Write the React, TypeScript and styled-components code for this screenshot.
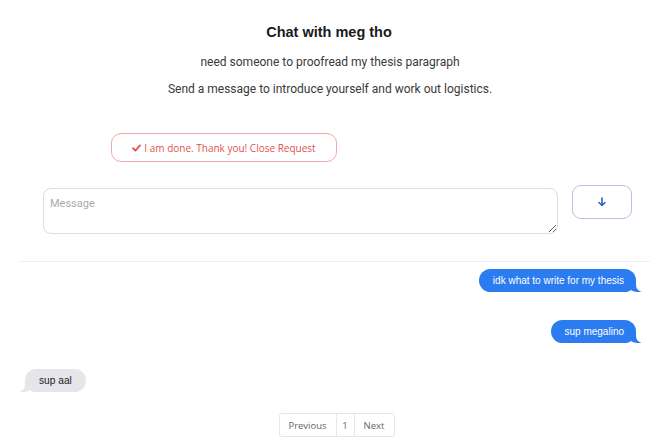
import React from "react";
import styled, { createGlobalStyle } from "styled-components";

const Global = createGlobalStyle`
  html, body { margin: 0; padding: 0; background: #fff; }
  body { font-family: "Liberation Sans", Arial, sans-serif; overflow: hidden; }
`;

const Page = styled.div`
  width: 650px;
  height: 448px;
  display: flex;
  flex-direction: column;
`;

const Header = styled.header`
  display: flex;
  flex-direction: column;
  align-items: center;
  padding-top: 22px;
  padding-left: 10px;
`;

const Title = styled.h1`
  margin: 0 0 0 -2px;
  font-family: "Liberation Sans", Arial, sans-serif;
  font-size: 14.5px;
  font-weight: 700;
  line-height: 20px;
  color: #1a1a1a;
`;

const Sub = styled.p<{ $top: number }>`
  margin: ${(p) => p.$top}px 0 0;
  font-family: Roboto, "Noto Sans", sans-serif;
  font-size: 12px;
  line-height: 16px;
  color: #3a3a3a;
`;

const CloseRow = styled.div`
  display: flex;
  padding-left: 111px;
  margin-top: 36px;
`;

const CloseButton = styled.button`
  width: 226px;
  height: 29px;
  border: 1px solid #f2a9a9;
  border-radius: 10px;
  background: #fff;
  color: #e0524f;
  font-family: "Open Sans", Lato, sans-serif;
  font-size: 10px;
  display: flex;
  align-items: center;
  justify-content: center;
  gap: 3px;
  padding: 0;
  cursor: pointer;
`;

const FormRow = styled.div`
  display: flex;
  align-items: flex-start;
  padding-left: 43px;
  margin-top: 23px;
  gap: 14px;
`;

const MessageBox = styled.textarea`
  box-sizing: border-box;
  width: 515px;
  height: 46px;
  margin-top: 3px;
  border: 1px solid #ddd;
  border-radius: 8px;
  padding: 8px 6px;
  font-family: Roboto, "Noto Sans", sans-serif;
  font-size: 11px;
  color: #333;
  outline: none;
  &::placeholder { color: #aaa; }
`;

const SendButton = styled.button`
  box-sizing: border-box;
  width: 60px;
  height: 34px;
  border: 1px solid #b5c3e3;
  border-radius: 9px;
  background: #fff;
  display: flex;
  align-items: center;
  justify-content: center;
  padding: 0;
  cursor: pointer;
`;

const Messages = styled.section`
  margin-top: 27px;
  margin-left: 18px;
  border-top: 1px solid #f0f0f0;
  display: flex;
  flex-direction: column;
  padding-top: 7px;
  padding-right: 14px;
`;

const Bubble = styled.div<{ $me?: boolean; $top: number }>`
  position: relative;
  align-self: ${(p) => (p.$me ? "flex-end" : "flex-start")};
  margin-top: ${(p) => p.$top}px;
  margin-left: ${(p) => (p.$me ? 0 : 7)}px;
  background: ${(p) => (p.$me ? "#2b7cf0" : "#e5e5ea")};
  color: ${(p) => (p.$me ? "#fff" : "#222")};
  font-family: "Liberation Sans", Arial, sans-serif;
  font-size: 10px;
  line-height: 13px;
  padding: 5px 12px 5px 14px;
  border-radius: 12px;
  z-index: 0;

  &::before {
    content: "";
    position: absolute;
    bottom: 0;
    ${(p) => (p.$me ? "right: -5px;" : "left: -5px;")}
    width: 14px;
    height: 12px;
    background: ${(p) => (p.$me ? "#2b7cf0" : "#e5e5ea")};
    ${(p) =>
      p.$me
        ? "border-bottom-left-radius: 10px 9px;"
        : "border-bottom-right-radius: 10px 9px;"}
    z-index: -1;
  }
  &::after {
    content: "";
    position: absolute;
    bottom: 0;
    ${(p) => (p.$me ? "right: -16px;" : "left: -16px;")}
    width: 16px;
    height: 12px;
    background: #fff;
    ${(p) =>
      p.$me
        ? "border-bottom-left-radius: 7px;"
        : "border-bottom-right-radius: 7px;"}
    z-index: 1;
  }
`;

const OtherText = styled.span`
  display: inline-block;
  padding: 0 2px 0 0;
  font-size: 10.2px;
`;

const Pager = styled.nav`
  display: flex;
  justify-content: center;
  margin-top: 21px;
  padding-left: 24px;
`;

const PageItem = styled.span<{ $w: number; $first?: boolean; $last?: boolean }>`
  box-sizing: border-box;
  width: ${(p) => p.$w}px;
  height: 24px;
  display: flex;
  align-items: center;
  justify-content: center;
  border: 1px solid #e6e6e6;
  margin-left: -1px;
  border-radius: ${(p) =>
    p.$first ? "3px 0 0 3px" : p.$last ? "0 3px 3px 0" : "0"};
  font-family: "Open Sans", Lato, sans-serif;
  font-size: 9.5px;
  color: #666;
`;

function Check() {
  return (
    <svg width="9" height="8" viewBox="0 0 9 8">
      <path d="M1 4.2 L3.4 6.6 L8 1.4" fill="none" stroke="#e0524f" strokeWidth="1.8" strokeLinecap="round" strokeLinejoin="round" />
    </svg>
  );
}

function ArrowDown() {
  return (
    <svg width="8" height="10" viewBox="0 0 8 10">
      <path d="M4 1 V8.5 M1 5.5 L4 8.5 L7 5.5" fill="none" stroke="#2e64c4" strokeWidth="1.6" strokeLinecap="round" strokeLinejoin="round" />
    </svg>
  );
}

export default function App() {
  return (
    <Page>
      <Global />
      <Header>
        <Title>Chat with meg tho</Title>
        <Sub $top={12}>need someone to proofread my thesis paragraph</Sub>
        <Sub $top={11}>Send a message to introduce yourself and work out logistics.</Sub>
      </Header>
      <CloseRow>
        <CloseButton>
          <Check />
          I am done. Thank you! Close Request
        </CloseButton>
      </CloseRow>
      <FormRow>
        <MessageBox placeholder="Message" />
        <SendButton aria-label="Send">
          <ArrowDown />
        </SendButton>
      </FormRow>
      <Messages>
        <Bubble $me $top={0}>idk what to write for my thesis</Bubble>
        <Bubble $me $top={28}>sup megalino</Bubble>
        <Bubble $top={26}>
          <OtherText>sup aal</OtherText>
        </Bubble>
      </Messages>
      <Pager>
        <PageItem $w={58} $first>Previous</PageItem>
        <PageItem $w={19}>1</PageItem>
        <PageItem $w={41} $last>Next</PageItem>
      </Pager>
    </Page>
  );
}
